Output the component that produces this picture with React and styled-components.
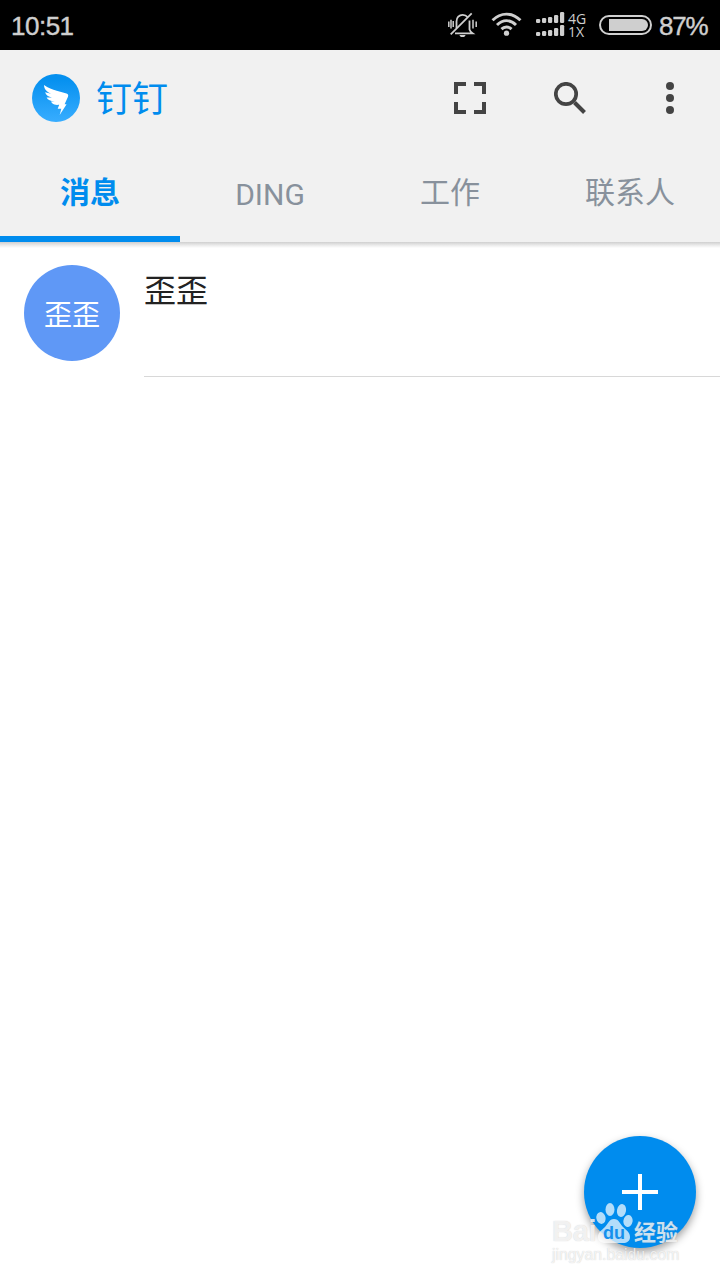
import React from "react";
import styled, { createGlobalStyle } from "styled-components";

const Global = createGlobalStyle`
  * { box-sizing: border-box; }
  body { margin: 0; background: #fff; font-family: Roboto, "Noto Sans CJK SC", sans-serif; }
`;
const Screen = styled.div`
  position: relative;
  width: 720px;
  height: 1280px;
  overflow: hidden;
  background: #fff;
`;
const StatusBar = styled.div`
  display: flex;
  align-items: center;
  justify-content: space-between;
  height: 50px;
  padding: 0 11px 1px;
  background: #000;
  color: #cfcfcf;
  font-size: 26px;
  line-height: 30px;
`;
const Clock = styled.span`
  padding-top: 2px;
  font-family: "Liberation Sans", sans-serif;
  letter-spacing: -0.5px;
  -webkit-text-stroke: 0.4px #cfcfcf;
`;
const Indicators = styled.div`
  display: flex;
  align-items: center;
  svg { display: block; flex: none; }
`;
const Gap = styled.span`width: 13px;`;
const Networks = styled.div`
  display: flex;
  flex-direction: column;
  width: 19px;
  margin: 0 12px 0 3px;
  font-family: "Open Sans", sans-serif;
  font-size: 14px;
  line-height: 13px;
`;
const Percent = styled.span`
  width: 50px;
  margin-left: 7px;
  padding-top: 2px;
  font-family: "Liberation Sans", sans-serif;
  font-size: 26px;
  letter-spacing: -1.2px;
  -webkit-text-stroke: 0.4px #cfcfcf;
`;
const Header = styled.header`
  height: 192px;
  background: #f1f1f1;
`;
const Shade = styled.div`
  height: 6px;
  background: linear-gradient(#cfcfcf, #e9e9e9 50%, #fff);
`;
const Toolbar = styled.div`
  display: flex;
  align-items: center;
  height: 96px;
  padding-left: 32px;
`;
const Title = styled.h1`
  flex: 1;
  margin: 0 0 4px 16px;
  color: #008cee;
  font: 400 36px/52px "Noto Sans CJK SC", sans-serif;
`;
const IconButton = styled.button`
  display: flex;
  align-items: center;
  justify-content: center;
  width: 100px;
  height: 96px;
  padding: 0;
  border: 0;
  background: none;
  color: #444;
`;
const Tabs = styled.nav`
  display: grid;
  grid-template-columns: repeat(4, 1fr);
  height: 96px;
`;
const Tab = styled.button`
  padding: ${(p) => (p.$latin ? 7 : 4)}px 0 0;
  border: 0;
  border-bottom: 6px solid ${(p) => (p.$active ? "#008cee" : "transparent")};
  background: none;
  color: ${(p) => (p.$active ? "#008cee" : "#88919c")};
  font: ${(p) => (p.$active ? 700 : 400)} 30px/40px Roboto, "Noto Sans CJK SC", sans-serif;
`;
const Row = styled.div`
  display: flex;
  height: 129px;
  padding-left: 24px;
`;
const Avatar = styled.div`
  display: flex;
  align-items: center;
  justify-content: center;
  width: 96px;
  height: 96px;
  margin-top: 17px;
  border-radius: 50%;
  background: #5f98f6;
  color: #fff;
  font: 400 28px/40px "Noto Sans CJK SC", sans-serif;
`;
const RowBody = styled.div`
  flex: 1;
  margin-left: 24px;
  padding-top: 17px;
  border-bottom: 1px solid #d8d8d8;
  color: #222;
  font: 400 32px/46px "Noto Sans CJK SC", sans-serif;
`;
const Fab = styled.button`
  position: absolute;
  right: 24px;
  bottom: 32px;
  display: flex;
  align-items: center;
  justify-content: center;
  width: 112px;
  height: 112px;
  padding: 0;
  border: 0;
  border-radius: 50%;
  background: #008cee;
  box-shadow: 0 4px 8px rgba(0, 0, 0, 0.38);
`;
const Watermark = styled.div`
  position: absolute;
  left: 552px;
  top: 1202px;
  width: 132px;
  color: rgba(255, 255, 255, 0.75);
  text-shadow: 0 0 1px rgba(130, 130, 130, 0.45);
`;
const Brand = styled.div`
  display: flex;
  align-items: flex-end;
  height: 43px;
`;
const Latin = styled.span`
  width: 43px;
  font: 700 29px/27px "Liberation Sans", sans-serif;
  letter-spacing: -0.3px;
`;
const Paw = styled.div`
  position: relative;
  width: 38px;
  height: 43px;
  svg { display: block; }
`;
const PawText = styled.span`
  position: absolute;
  left: 8px;
  top: 21px;
  color: #1690ec;
  font: 700 18px/20px "Liberation Sans", sans-serif;
  text-shadow: none;
`;
const Chinese = styled.span`
  margin: 0 0 1px 1px;
  font: 700 22px/27px "Noto Sans CJK SC", sans-serif;
`;
const Site = styled.div`
  font: 400 15.8px/18px "Liberation Sans", sans-serif;
  padding-top: 1px;
`;

const Muted = () => (
  <svg width="30" height="26" viewBox="0 0 30 26" fill="none" stroke="#cfcfcf" strokeWidth="1.800">
    <path d="M.8 9.500v5.500M3 7.800v8.700M5.200 9v6M25 7.800v8.700M28.200 9.500v5.500" strokeWidth="1.500" />
    <path d="M8.500 16V9.500c0-4 2.600-6.700 6.200-6.700 2 0 3.700.8 4.800 2.200M21.500 8.500v9c.5 1.700 1.500 2.800 3 3.800H7" />
    <path d="M2.700 22.300l21-21" />
    <path d="M11.300 23h6.400l-1.500 1.900h-3.400z" fill="#cfcfcf" stroke="none" />
  </svg>
);
const Wifi = () => (
  <svg width="31" height="25" viewBox="0 0 32 25" fill="none" stroke="#cfcfcf" strokeWidth="3">
    <path d="M1.600 8.200C10-.3 22-.3 30.400 8.200M6.200 13c6-6 13.600-6 19.600 0M10.800 17.300c3-3 7.400-3 10.400 0" />
    <circle cx="16" cy="21.500" r="2.700" fill="#cfcfcf" stroke="none" />
  </svg>
);
const Signal = () => (
  <svg width="30" height="26" viewBox="0 0 30 26" fill="#cfcfcf">
    {[11, 24].map((base) =>
      [4, 5, 6, 8, 11].map((h, i) => (
        <rect key={`${base}-${i}`} x={1 + i * 6} y={base - h} width="4.200" height={h} rx="1.300" />
      ))
    )}
  </svg>
);
const Battery = () => (
  <svg width="53" height="20" viewBox="0 0 53 20">
    <rect x="1" y="1" width="51" height="18" rx="9" fill="none" stroke="#cfcfcf" strokeWidth="2" />
    <path d="M10 4h33a6 6 0 0 1 0 12H10z" fill="#cfcfcf" />
  </svg>
);
const Logo = () => (
  <svg width="48" height="48" viewBox="0 0 48 48">
    <defs>
      <linearGradient id="sky" x1="0" y1="0" x2="0" y2="1">
        <stop offset="0.1" stopColor="#0590ef" />
        <stop offset="1" stopColor="#38adff" />
      </linearGradient>
    </defs>
    <circle cx="24" cy="24" r="24" fill="url(#sky)" />
    <path
      fill="#fff"
      d="M12 11c4 3 8.500 4.500 12.700 5.800l9.800 2.800c1.600.6 2.100 1.700 1.500 3.100L32.600 30.200h2L27.700 41l1.600-6.300h-3.600l1.500-3.900c-3 .4-5.300 0-7-1.500-.7-.6-1-1.100-1.200-1.700l4-.4c-4.100.1-7-1-8.400-3.700l5.400.1c-3.600-1-6-2.500-6.900-5.400l6 1.500c-4.200-1.700-7-4.500-7.100-8.700z"
    />
  </svg>
);

const tabs = [
  { label: "消息", active: true },
  { label: "DING", latin: true },
  { label: "工作" },
  { label: "联系人" },
];

export default function App() {
  return (
    <Screen>
      <Global />
      <StatusBar>
        <Clock>10:51</Clock>
        <Indicators>
          <Muted />
          <Gap />
          <Wifi />
          <Gap />
          <Signal />
          <Networks>
            <span>4G</span>
            <span>1X</span>
          </Networks>
          <Battery />
          <Percent>87%</Percent>
        </Indicators>
      </StatusBar>
      <Header>
        <Toolbar>
          <Logo />
          <Title>钉钉</Title>
          <IconButton aria-label="扫一扫">
            <svg width="32" height="32" viewBox="0 0 32 32" fill="none" stroke="currentColor" strokeWidth="4">
              <path d="M2 12V2h10M20 2h10v10M30 20v10H20M12 30H2V20" />
            </svg>
          </IconButton>
          <IconButton aria-label="搜索">
            <svg width="32" height="32" viewBox="0 0 32 32" fill="none" stroke="currentColor">
              <circle cx="12" cy="12" r="10.200" strokeWidth="3.700" />
              <path d="m20.500 20.500 10 10" strokeWidth="4" />
            </svg>
          </IconButton>
          <IconButton aria-label="更多">
            <svg width="8" height="32" viewBox="0 0 8 32" fill="currentColor">
              <circle cx="4" cy="4" r="4" />
              <circle cx="4" cy="16" r="4" />
              <circle cx="4" cy="28" r="4" />
            </svg>
          </IconButton>
        </Toolbar>
        <Tabs>
          {tabs.map((t) => (
            <Tab key={t.label} $active={t.active} $latin={t.latin}>{t.label}</Tab>
          ))}
        </Tabs>
      </Header>
      <Shade />
      <Row>
        <Avatar>歪歪</Avatar>
        <RowBody>歪歪</RowBody>
      </Row>
      <Fab aria-label="新建">
        <svg width="36" height="36" viewBox="0 0 36 36" stroke="#fff" strokeWidth="4">
          <path d="M0 18h36M18 0v36" />
        </svg>
      </Fab>
      <Watermark>
        <Brand>
          <Latin>Bai</Latin>
          <Paw>
            <svg width="38" height="43" viewBox="0 0 38 43" fill="#fff" fillOpacity="0.7">
              <ellipse cx="6" cy="16" rx="4.600" ry="6" transform="rotate(-12 6 16)" />
              <ellipse cx="15" cy="7.500" rx="4.500" ry="6.500" />
              <ellipse cx="26.500" cy="8.500" rx="4.500" ry="6.500" transform="rotate(12 26.500 8.500)" />
              <ellipse cx="33" cy="19" rx="4.600" ry="6" transform="rotate(10 33 19)" />
              <path d="M19 17c5 0 6 5 9 8s7 5 7 10c0 4-3 6-7 6H11c-5 0-8-2-8-6 0-5 4-7 7-10s4-8 9-8z" />
            </svg>
            <PawText>du</PawText>
          </Paw>
          <Chinese>经验</Chinese>
        </Brand>
        <Site>jingyan.baidu.com</Site>
      </Watermark>
    </Screen>
  );
}
